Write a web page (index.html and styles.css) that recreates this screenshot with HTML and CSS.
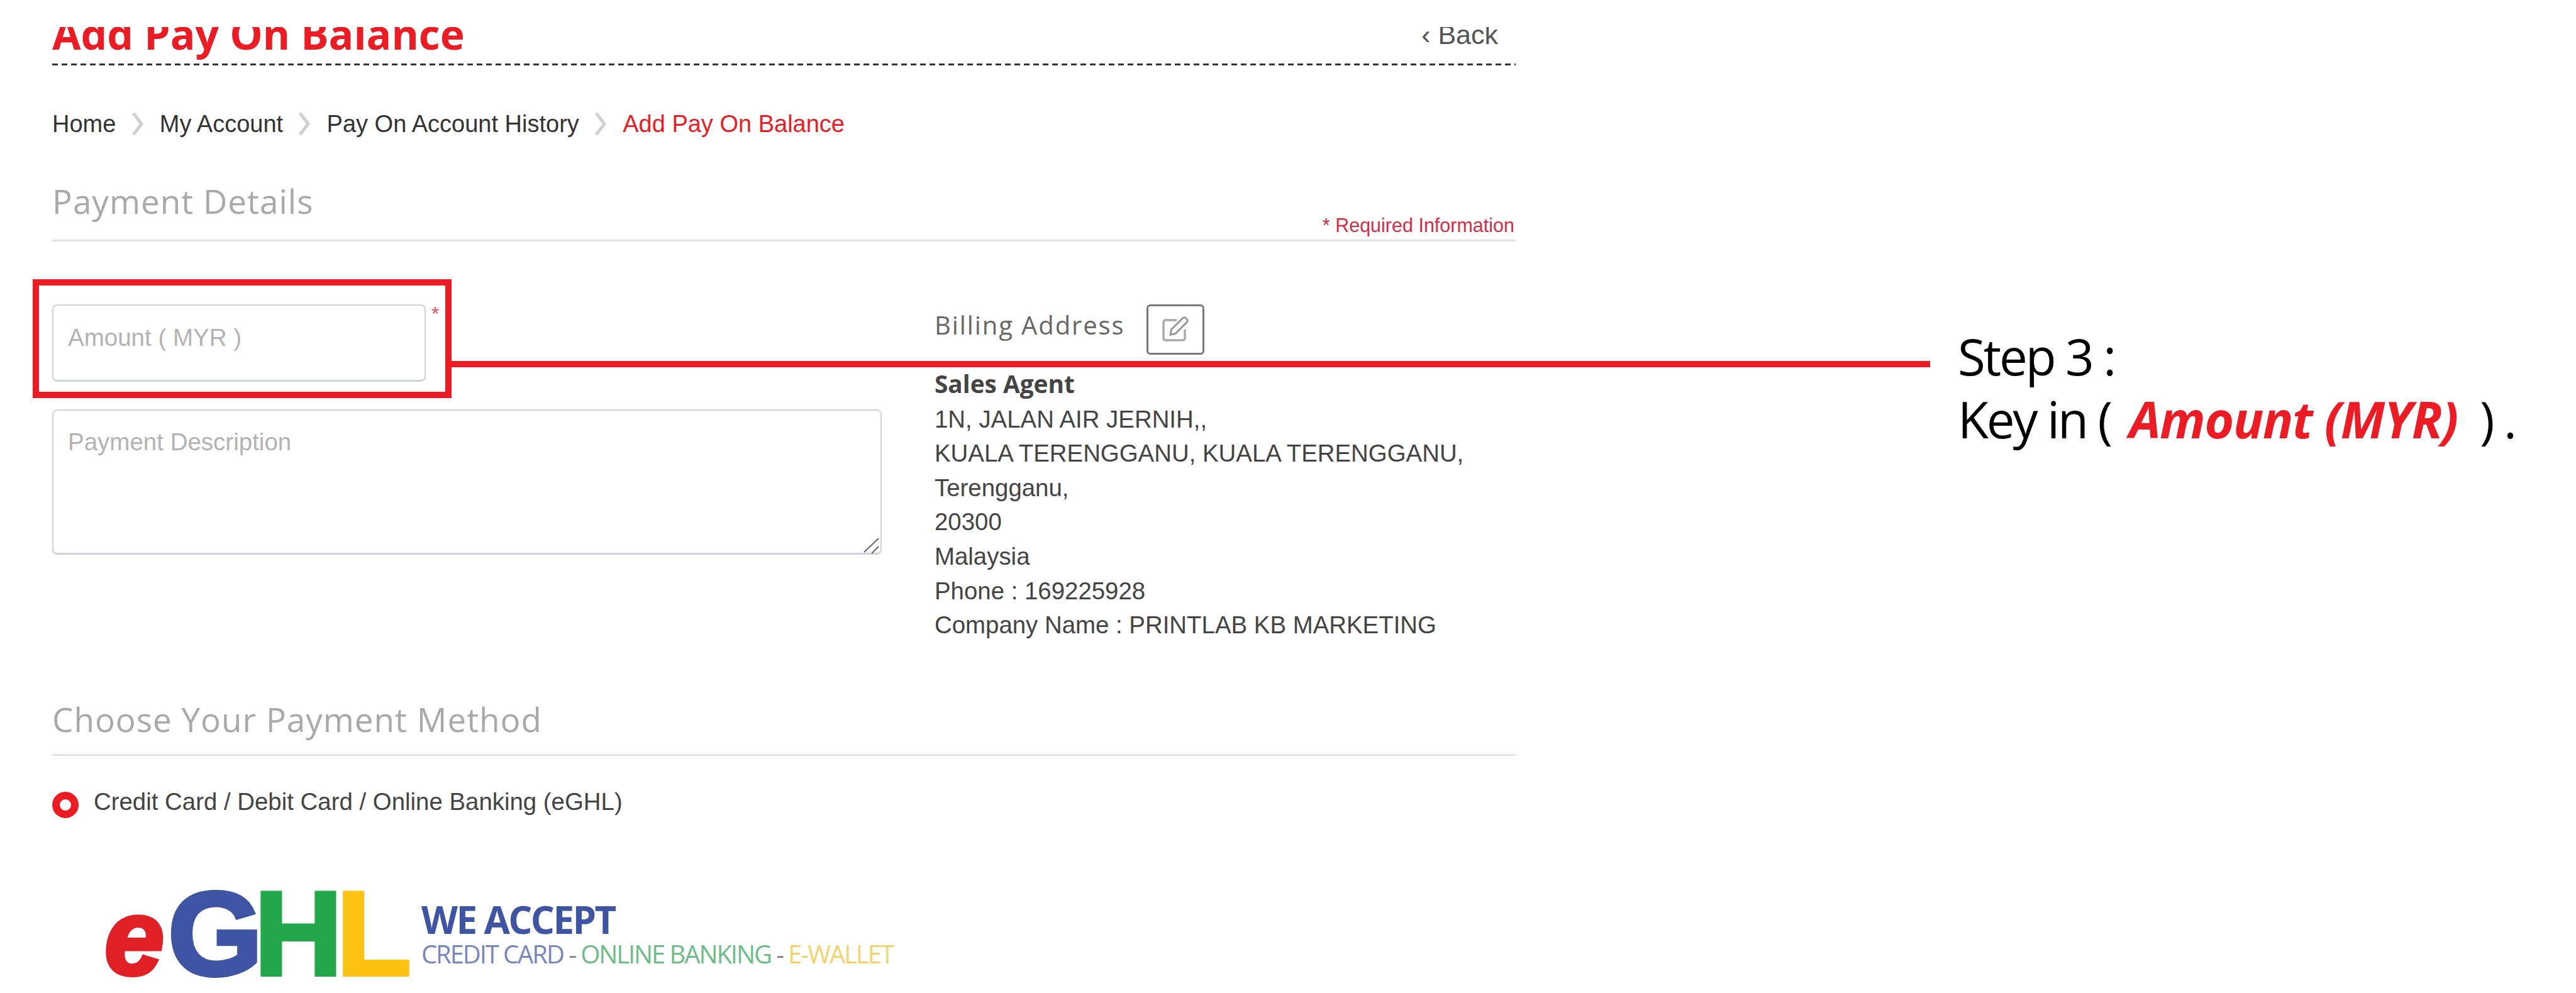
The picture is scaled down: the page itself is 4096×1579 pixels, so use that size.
FILE: index.html
```html
<!DOCTYPE html>
<html lang="en">
<head>
<meta charset="utf-8">
<title>Add Pay On Balance</title>
<link rel="stylesheet" href="styles.css">
</head>
<body>
<main class="page">
  <header class="title-row">
    <h1 class="title">Add Pay On Balance</h1>
    <a class="back">‹ Back</a>
  </header>
  <div class="dash-rule"></div>

  <nav class="crumbs">
    <span>Home</span>
    <svg class="chev" viewBox="0 0 21 40"><path d="M3 3l13 17L3 37"/></svg>
    <span>My Account</span>
    <svg class="chev" viewBox="0 0 21 40"><path d="M3 3l13 17L3 37"/></svg>
    <span>Pay On Account History</span>
    <svg class="chev" viewBox="0 0 21 40"><path d="M3 3l13 17L3 37"/></svg>
    <span class="crumb-current">Add Pay On Balance</span>
  </nav>

  <section class="section-head section-details">
    <h2 class="section-title">Payment Details</h2>
    <span class="required">* Required Information</span>
  </section>

  <section class="form-row">
    <div class="form-left">
      <div class="amount-row">
        <input class="field field-amount" type="text" placeholder="Amount ( MYR )">
        <span class="star">*</span>
      </div>
      <div class="area-wrap">
        <textarea class="field field-desc" placeholder="Payment Description"></textarea>
        <svg class="grip" viewBox="0 0 30 30"><path d="M5 26L28 4M17 28L28 17"/></svg>
      </div>
    </div>
    <div class="form-right">
      <div class="billing-head">
        <span class="billing-label">Billing Address</span>
        <button class="edit-btn" type="button">
          <svg class="edit-icon" viewBox="0 0 48 48">
            <path class="edit-box" d="M26 9H8a3 3 0 0 0-3 3v26a3 3 0 0 0 3 3h28a3 3 0 0 0 3-3V24"/>
            <path class="edit-pen" d="M16 32l1.500-8L36 5.500a3 3 0 0 1 4.200 0l2.300 2.300a3 3 0 0 1 0 4.200L24 30.500z"/>
          </svg>
        </button>
      </div>
      <address class="address">
        <strong class="agent">Sales Agent</strong>
        <span>1N, JALAN AIR JERNIH,,</span>
        <span>KUALA TERENGGANU, KUALA TERENGGANU,</span>
        <span>Terengganu,</span>
        <span>20300</span>
        <span>Malaysia</span>
        <span>Phone : 169225928</span>
        <span>Company Name : PRINTLAB KB MARKETING</span>
      </address>
    </div>
  </section>

  <section class="section-head section-method">
    <h2 class="section-title">Choose Your Payment Method</h2>
  </section>

  <div class="radio-row">
    <span class="radio"></span>
    <span class="radio-label">Credit Card / Debit Card / Online Banking (eGHL)</span>
  </div>

  <div class="logo">
    <svg class="logo-mark" viewBox="0 0 480 150">
      <text class="lg lg-e" x="-2" y="143" font-size="171">e</text>
      <text class="lg" transform="translate(99 144) scale(1.02 1)" font-size="190"><tspan class="lg-g">G</tspan><tspan class="lg-h" dx="-13">H</tspan><tspan class="lg-l" dx="-9">L</tspan></text>
    </svg>
    <div class="logo-text">
      <div class="logo-head">WE ACCEPT</div>
      <div class="logo-sub"><span class="c-blue">CREDIT CARD</span> <span class="c-grey">-</span> <span class="c-green">ONLINE BANKING</span> <span class="c-grey">-</span> <span class="c-yellow">E-WALLET</span></div>
    </div>
  </div>
</main>

<div class="callout-box"></div>
<div class="callout-line"></div>
<div class="callout-text">
  <div>Step 3 :</div>
  <div>Key in ( <b class="callout-hl">Amount (MYR)</b>&nbsp; ) .</div>
</div>
</body>
</html>
```

FILE: styles.css
```css
* { box-sizing: border-box; }
html, body { margin: 0; padding: 0; background: #fff; }
body {
  position: relative;
  width: 4096px;
  height: 1579px;
  overflow: hidden;
  font-family: "Liberation Sans", Arial, sans-serif;
  color: #444;
}
.page {
  width: 2327px;
  margin-left: 83px;
  padding-top: 21px;
}

/* header */
.title-row {
  display: flex;
  justify-content: space-between;
  align-items: flex-start;
  height: 80px;
  clip-path: inset(22px 0 0 0);
  padding-right: 28px;
}
.title {
  margin: 0;
  font: 700 66px/64px "Open Sans", sans-serif;
  color: #ed1c24;
}
.back {
  font-size: 43px;
  line-height: 69px;
  color: #555;
}
.dash-rule {
  height: 3px;
  background: repeating-linear-gradient(90deg, #333 0 9px, transparent 9px 15px);
}

/* breadcrumb */
.crumbs {
  display: flex;
  align-items: center;
  gap: 24.200px;
  margin-top: 68px;
  font-size: 38px;
  line-height: 50px;
  color: #333;
}
.chev { width: 21px; height: 40px; fill: none; stroke: #d0d0d0; stroke-width: 5; }
.crumb-current { color: #ed1c24; }

/* section headings */
.section-head {
  display: flex;
  justify-content: space-between;
  border-bottom: 3px solid #e2e3e6;
}
.section-details { margin-top: 68px; padding-bottom: 31px; }
.section-method { margin-top: 92.600px; padding-bottom: 25px; }
.section-title {
  margin: 0;
  font: 400 53px/60px "Open Sans", sans-serif;
  letter-spacing: 1px;
  color: #a9a9a9;
}
.required {
  align-self: flex-end;
  margin-bottom: -23px;
  padding-right: 2px;
  font-size: 30.500px;
  line-height: 30px;
  color: #dc2a45;
}

/* form */
.form-row {
  display: flex;
  gap: 84px;
  margin-top: 100px;
}
.form-left { width: 1319px; }
.amount-row { display: flex; align-items: flex-start; gap: 9px; }
.field {
  display: block;
  border: 2px solid #ced4da;
  border-bottom-width: 3px;
  border-radius: 8px;
  background: #fff;
  font-family: "Liberation Sans", Arial, sans-serif;
  font-size: 38.500px;
  outline: none;
}
.field::placeholder { color: #b3b3b3; opacity: 1; }
.field-amount {
  width: 594px;
  height: 123px;
  padding: 0 23px 16px;
}
.star {
  font-size: 32px;
  line-height: 30px;
  color: #e8506a;
}
.area-wrap { position: relative; margin-top: 44px; }
.field-desc {
  width: 100%;
  height: 231px;
  padding: 27px 23px;
  line-height: 46px;
  resize: none;
}
.grip {
  position: absolute;
  right: 3px;
  bottom: 0;
  width: 30px;
  height: 30px;
  fill: none;
  stroke: #666;
  stroke-width: 2;
}

/* billing */
.form-right { flex: 1; }
.billing-head { display: flex; align-items: center; gap: 34px; height: 80px; }
.billing-label {
  margin-bottom: 15px;
  font: 400 40px/50px "Open Sans", sans-serif;
  letter-spacing: 1.900px;
  color: #666;
}
.edit-btn {
  display: flex;
  align-items: center;
  justify-content: center;
  width: 92px;
  height: 80px;
  padding: 0;
  border: 3px solid #777;
  border-radius: 6px;
  background: #fff;
}
.edit-icon { width: 48px; height: 48px; fill: none; }
.edit-box { stroke: #aaa; stroke-width: 3.500; }
.edit-pen { stroke: #999; stroke-width: 3; }
.address {
  display: flex;
  flex-direction: column;
  margin-top: 19px;
  font-style: normal;
  font-size: 38.400px;
  line-height: 54.600px;
  color: #444;
}
.agent {
  margin-bottom: 2px;
  font: 700 38.800px/54.600px "Open Sans", sans-serif;
  color: #444;
}

/* payment method */
.radio-row {
  display: flex;
  align-items: flex-start;
  gap: 24px;
  margin-top: 57px;
}
.radio {
  width: 42px;
  height: 42px;
  border: 12.500px solid #ed1c24;
  border-radius: 50%;
  background: #fff;
}
.radio-label {
  margin-top: -4px;
  font-size: 38.400px;
  line-height: 40px;
  color: #444;
}

/* logo */
.logo {
  display: flex;
  align-items: flex-start;
  gap: 22px;
  margin: 105px 0 0 85px;
}
.logo-mark { width: 480px; height: 150px; flex: none; overflow: visible; }
.lg { font-family: "Liberation Sans", sans-serif; font-weight: 700; stroke-width: 6; }
.lg-e { fill: #e01f26; stroke: #e01f26; font-style: italic; }
.lg-g { fill: #3f55a4; stroke: #3f55a4; }
.lg-h { fill: #22a84b; stroke: #22a84b; }
.lg-l { fill: #fdc214; stroke: #fdc214; }
.logo-text { padding-top: 22px; font-family: "Open Sans", sans-serif; white-space: nowrap; }
.logo-head { font-size: 60px; line-height: 68px; font-weight: 700; letter-spacing: -2.600px; color: #3f55a4; }
.logo-sub { margin-top: -4px; font-size: 40px; line-height: 50px; letter-spacing: -2.100px; }
.c-blue { color: #7986bd; }
.c-green { color: #6dbd88; }
.c-yellow { color: #f6d26c; }
.c-grey { color: #8c8c8c; }

/* annotation over the page */
.callout-box {
  position: absolute;
  left: 52px;
  top: 444px;
  width: 666px;
  height: 189px;
  border: 10px solid #ed1c24;
}
.callout-line {
  position: absolute;
  left: 718px;
  top: 574px;
  width: 2351px;
  height: 10px;
  background: #ed1c24;
}
.callout-text {
  position: absolute;
  left: 3113px;
  top: 516px;
  font: 400 80px/100px "Open Sans", sans-serif;
  letter-spacing: -3.200px;
  color: #000;
  white-space: nowrap;
}
.callout-hl { margin-left: 12px; font-weight: 700; font-style: italic; letter-spacing: -1.300px; color: #ed1c24; }
```
